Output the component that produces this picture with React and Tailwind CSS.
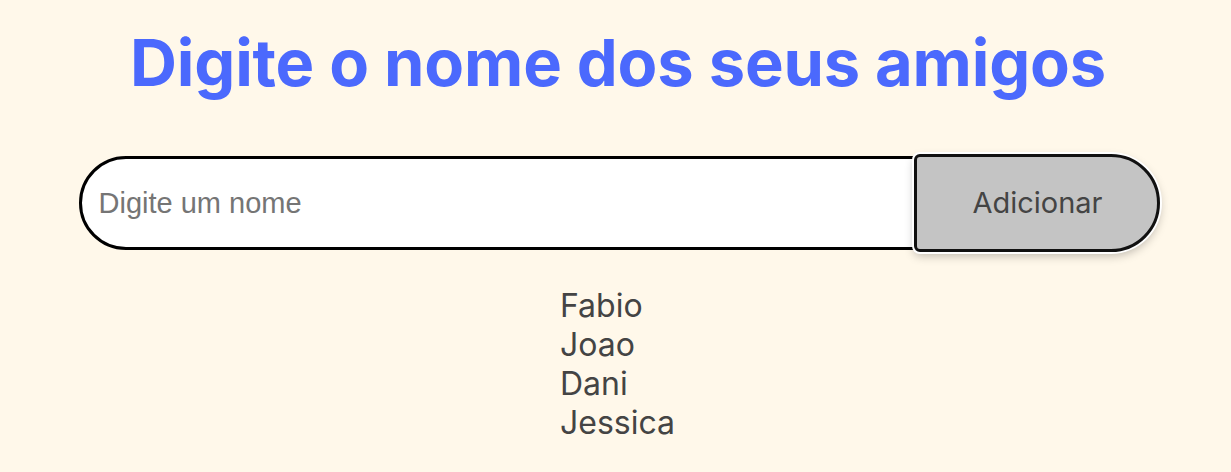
export default function App() {
    const amigos = ["Fabio", "Joao", "Dani", "Jessica"];

    return (
        <div className="min-h-[472px] w-full bg-[#FFF8EA] font-['Inter',sans-serif] flex flex-col items-center">
            {/* Title */}
            <h1 className="mt-[24px] text-[65px] leading-[78px] font-bold text-[#4B69FD] tracking-[-0.2px] pl-[5px]">
                Digite o nome dos seus amigos
            </h1>

            {/* Input + button */}
            <div className="mt-[52px] flex items-center w-[1081px] ml-[7px]">
                <input
                    type="text"
                    placeholder="Digite um nome"
                    className="w-[837px] h-[94px] border-[3px] border-black rounded-l-[47px] bg-white pl-[17px] text-[29px] font-['Liberation_Sans',sans-serif] placeholder:text-[#757575] outline-none"
                />
                <button className="-ml-[2px] w-[246px] h-[98px] bg-[#C4C4C4] border-[3px] border-[#111] rounded-l-[6px] rounded-r-[50px] ring-2 ring-white shadow-[0_4px_10px_rgba(0,0,0,0.25)] text-[29px] text-[#444] pl-[2px]">
                    Adicionar
                </button>
            </div>

            {/* Names list */}
            <ul className="mt-[34px] text-[32px] leading-[39px] text-[#444] pl-[4px]">
                {amigos.map((nome) => (
                    <li key={nome}>{nome}</li>
                ))}
            </ul>
        </div>
    );
}
